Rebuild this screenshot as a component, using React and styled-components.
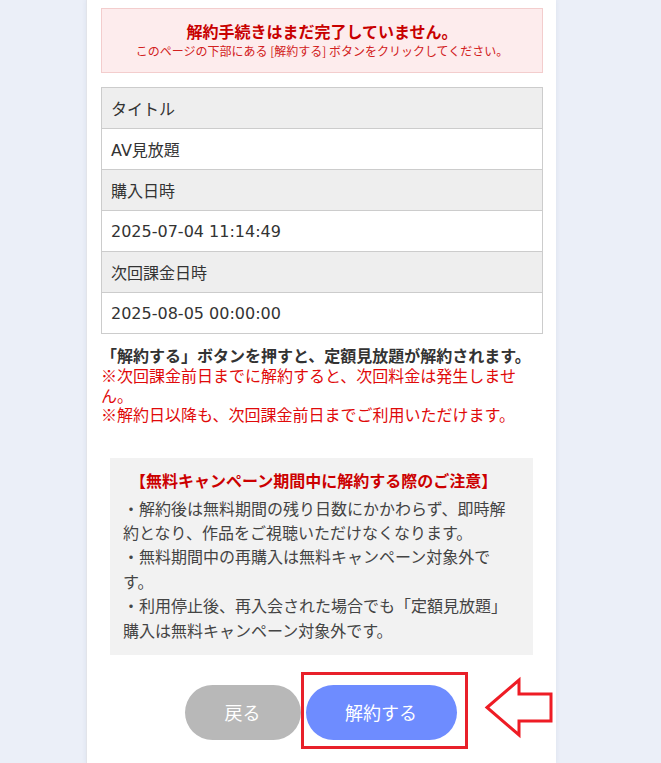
import React from "react";
import styled, { createGlobalStyle } from "styled-components";

const Global = createGlobalStyle`
  html, body { margin: 0; padding: 0; }
  body {
    background: #ebeff8;
    font-family: "Noto Sans CJK JP", "Noto Sans", sans-serif;
    color: #333;
  }
`;

const Page = styled.div`
  display: flex;
  justify-content: flex-start;
  min-height: 763px;
  padding-left: 86px;
`;

const Panel = styled.main`
  width: 470px;
  min-height: 763px;
  box-sizing: border-box;
  background: #fff;
  padding: 8px 13px 0 14px;
  box-shadow: 0 0 5px rgba(40, 60, 110, 0.08);
  border-left: 1px solid #e2e4ea;
`;

const Alert = styled.div`
  height: 65px;
  box-sizing: border-box;
  background: #fdeced;
  border: 1px solid #f3cdcd;
  display: flex;
  flex-direction: column;
  align-items: center;
  justify-content: center;
  padding-bottom: 2px;
`;

const AlertTitle = styled.div`
  color: #c80000;
  font-weight: 700;
  font-size: 16px;
  line-height: 22px;
`;

const AlertText = styled.div`
  color: #d22020;
  font-size: 12px;
  line-height: 18px;
`;

const Table = styled.div`
  margin-top: 14px;
  border: 1px solid #cccccc;
  border-bottom: none;
`;

const Cell = styled.div`
  height: 41px;
  box-sizing: border-box;
  display: flex;
  align-items: center;
  padding-left: 9px;
  font-family: "DejaVu Sans", "Noto Sans CJK JP", sans-serif;
  font-size: 16px;
  color: #333;
  border-bottom: 1px solid #cccccc;
  background: ${(p) => (p.$head ? "#eeeeee" : "#ffffff")};
`;

const Lead = styled.p`
  margin: 11px 0 0;
  font-size: 16px;
  font-weight: 700;
  line-height: 21px;
  color: #333;
`;

const Note = styled.p`
  margin: 0;
  font-size: 16px;
  line-height: 19.5px;
  color: #e00a0a;
`;

const Caution = styled.section`
  margin: 33px 10px 0 9px;
  background: #f2f2f2;
  padding: 10px 20px 13px 13px;
`;

const CautionTitle = styled.div`
  color: #cc0000;
  font-weight: 700;
  font-size: 16px;
  line-height: 24px;
  padding-left: 7px;
  margin-bottom: 4px;
`;

const CautionText = styled.p`
  margin: 0;
  color: #444;
  font-size: 16px;
  line-height: 24.4px;
`;

const Actions = styled.div`
  margin-top: 30px;
  display: flex;
  justify-content: center;
  gap: 5px;
  padding-right: 3px;
`;

const Button = styled.button`
  height: 55px;
  width: ${(p) => p.$w}px;
  border: none;
  border-radius: 28px;
  background: ${(p) => p.$bg};
  color: #fff;
  font-family: "Noto Sans CJK JP", sans-serif;
  font-size: 18px;
  cursor: pointer;
`;

const Highlight = styled.div`
  position: relative;
`;

const Frame = styled.div`
  position: absolute;
  left: -5px;
  top: -13px;
  width: 167px;
  height: 77px;
  box-sizing: border-box;
  border: 3px solid #e8202a;
  pointer-events: none;
`;

const Arrow = styled.svg`
  position: absolute;
  left: 179px;
  top: -7px;
  overflow: visible;
`;

export default function App() {
  const rows = [
    ["タイトル", true],
    ["AV見放題", false],
    ["購入日時", true],
    ["2025-07-04 11:14:49", false],
    ["次回課金日時", true],
    ["2025-08-05 00:00:00", false],
  ];
  return (
    <>
      <Global />
      <Page>
        <Panel>
          <Alert>
            <AlertTitle>解約手続きはまだ完了していません。</AlertTitle>
            <AlertText>このページの下部にある [解約する] ボタンをクリックしてください。</AlertText>
          </Alert>
          <Table>
            {rows.map(([t, h], i) => (
              <Cell key={i} $head={h}>{t}</Cell>
            ))}
          </Table>
          <Lead>「解約する」ボタンを押すと、定額見放題が解約されます。</Lead>
          <Note>※次回課金前日までに解約すると、次回料金は発生しません。</Note>
          <Note>※解約日以降も、次回課金前日までご利用いただけます。</Note>
          <Caution>
            <CautionTitle>【無料キャンペーン期間中に解約する際のご注意】</CautionTitle>
            <CautionText>・解約後は無料期間の残り日数にかかわらず、即時解約となり、作品をご視聴いただけなくなります。</CautionText>
            <CautionText>・無料期間中の再購入は無料キャンペーン対象外です。</CautionText>
            <CautionText>・利用停止後、再入会された場合でも「定額見放題」購入は無料キャンペーン対象外です。</CautionText>
          </Caution>
          <Actions>
            <Button $w={116} $bg="#b8b8b8">戻る</Button>
            <Highlight>
              <Button $w={151} $bg="#6e8cff">解約する</Button>
              <Frame />
              <Arrow width="70" height="58" viewBox="0 0 70 58">
                <polygon
                  points="2,29.5 34,2 34,16 66,16 66,43 34,43 34,57"
                  fill="#fff"
                  stroke="#ee1c25"
                  strokeWidth="3"
                  strokeLinejoin="miter"
                />
              </Arrow>
            </Highlight>
          </Actions>
        </Panel>
      </Page>
    </>
  );
}
